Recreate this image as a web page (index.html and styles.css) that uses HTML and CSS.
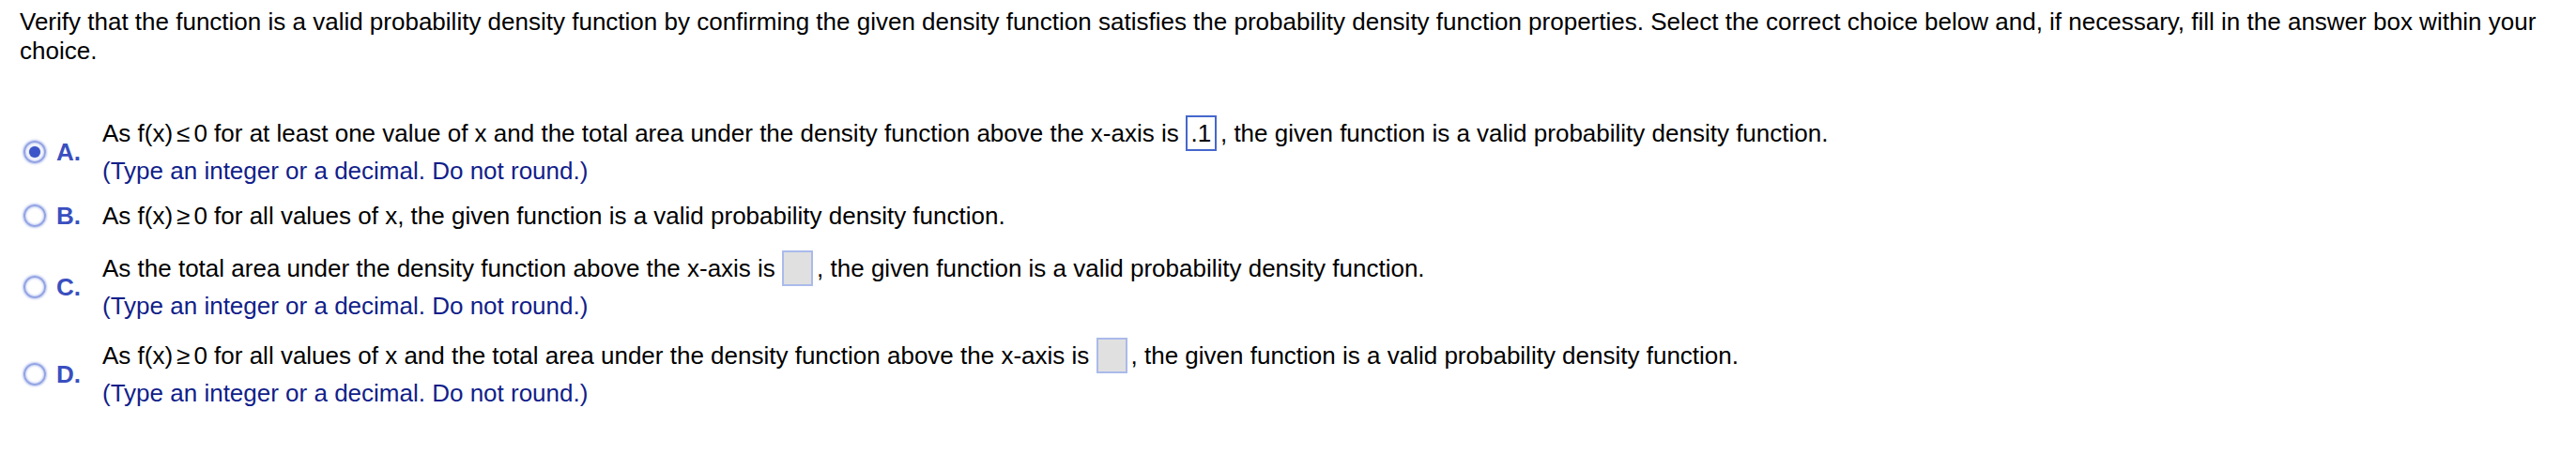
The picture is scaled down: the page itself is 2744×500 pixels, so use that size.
FILE: index.html
```html
<!DOCTYPE html>
<html lang="en">
<head>
<meta charset="utf-8">
<title>Probability density function</title>
<link rel="stylesheet" href="styles.css">
</head>
<body>
<main class="page">
  <p class="prompt">Verify that the function is a valid probability density function by confirming the given density function satisfies the probability density function properties. Select the correct choice below and, if necessary, fill in the answer box within your choice.</p>
  <ul class="choices">
    <li class="choice selected">
      <span class="radio"></span>
      <span class="letter">A.</span>
      <div class="body">
        <div class="line">As f(x)<span class="rel">≤</span>0 for at least one value of x and the total area under the density function above the x-axis is <span class="box filled">.1</span>, the given function is a valid probability density function.</div>
        <div class="line hint">(Type an integer or a decimal. Do not round.)</div>
      </div>
    </li>
    <li class="choice single">
      <span class="radio"></span>
      <span class="letter">B.</span>
      <div class="body">
        <div class="line">As f(x)<span class="rel">≥</span>0 for all values of x, the given function is a valid probability density function.</div>
      </div>
    </li>
    <li class="choice">
      <span class="radio"></span>
      <span class="letter">C.</span>
      <div class="body">
        <div class="line">As the total area under the density function above the x-axis is <span class="box"></span>, the given function is a valid probability density function.</div>
        <div class="line hint">(Type an integer or a decimal. Do not round.)</div>
      </div>
    </li>
    <li class="choice">
      <span class="radio"></span>
      <span class="letter">D.</span>
      <div class="body">
        <div class="line">As f(x)<span class="rel">≥</span>0 for all values of x and the total area under the density function above the x-axis is <span class="box"></span>, the given function is a valid probability density function.</div>
        <div class="line hint">(Type an integer or a decimal. Do not round.)</div>
      </div>
    </li>
  </ul>
</main>
</body>
</html>
```

FILE: styles.css
```css
html, body {
  margin: 0;
  padding: 0;
  background: #ffffff;
}

body {
  font-family: "Liberation Sans", Arial, sans-serif;
  font-size: 26px;
  color: #000000;
}

.page {
  padding: 8px 12px 0 21px;
}

.prompt {
  margin: 0;
  line-height: 31px;
}

.choices {
  list-style: none;
  margin: 52px 0 0 0;
  padding: 0;
}

.choice {
  display: flex;
  align-items: center;
  margin-bottom: 13px;
  margin-left: 4px;
}

.choice:first-child {
  margin-bottom: 8px;
}

.choice.single {
  margin-bottom: 16px;
}

.radio {
  flex: none;
  width: 20px;
  height: 20px;
  border-radius: 50%;
  border: 2px solid #93a4e4;
  box-shadow: 0 0 2px 1px rgba(147, 164, 228, 0.6), inset 0 0 2px 1px rgba(147, 164, 228, 0.5);
  display: flex;
  align-items: center;
  justify-content: center;
}

.selected .radio::after {
  content: "";
  width: 12px;
  height: 12px;
  border-radius: 50%;
  background: #3c56c9;
  box-shadow: 0 0 2px rgba(60, 86, 201, 0.6);
}

.letter {
  flex: none;
  width: 49px;
  margin-left: 11px;
  font-weight: bold;
  color: #3a4fbf;
}

.body {
  flex: 1;
}

.line {
  line-height: 40px;
  white-space: nowrap;
}

.hint {
  color: #111e8a;
}

.rel {
  margin: 0 4px;
}

.box {
  display: inline-block;
  box-sizing: border-box;
  width: 33px;
  height: 38px;
  vertical-align: middle;
  margin: -4px 4px 0 0;
  background: #e0e0e0;
  border: 2px solid #aabaea;
  line-height: 34px;
  text-align: center;
}

.box.filled {
  background: #ffffff;
  border-color: #4567cc;
}
```
